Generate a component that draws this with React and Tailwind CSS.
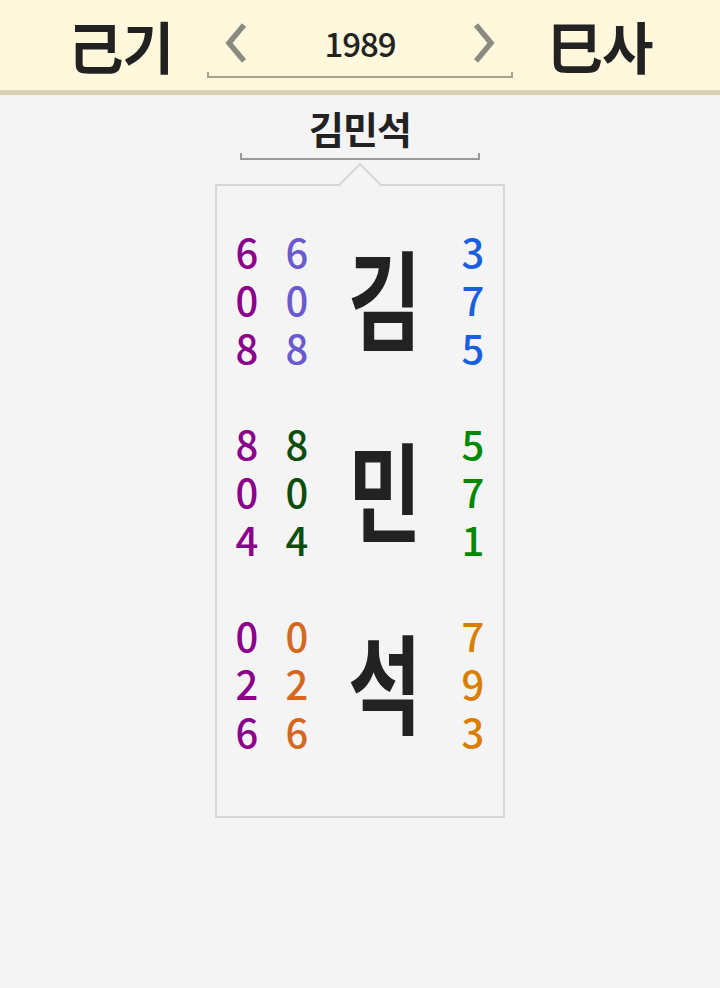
const FONT = { fontFamily: '"Noto Sans CJK KR", "Noto Sans", sans-serif' };

const rows = [
  { ch: "김", a: ["6", "0", "8"], b: ["6", "0", "8"], c: ["3", "7", "5"], bc: "text-[#6a5acd]", cc: "text-[#1a5fe0]" },
  { ch: "민", a: ["8", "0", "4"], b: ["8", "0", "4"], c: ["5", "7", "1"], bc: "text-[#0d4d0d]", cc: "text-[#008800]" },
  { ch: "석", a: ["0", "2", "6"], b: ["0", "2", "6"], c: ["7", "9", "3"], bc: "text-[#d2691e]", cc: "text-[#d97f00]" },
];

function Digits({ list, color }) {
  return (
    <div className={`flex w-[50px] flex-col items-center ${color}`}>
      {list.map((d, i) => (
        <span key={i} className="text-[40px] font-medium leading-[48px]">
          {d}
        </span>
      ))}
    </div>
  );
}

function Chevron({ flip }) {
  return (
    <svg width="26" height="42" viewBox="0 0 26 42" className={flip ? "-scale-x-100" : ""}>
      <path d="M21 3 L6 21 L21 39" fill="none" stroke="#8b8b80" strokeWidth="5.5" />
    </svg>
  );
}

export default function App() {
  return (
    <div className="min-h-screen bg-[#f4f4f4] text-[#222]" style={FONT}>
      <header className="border-b-[5px] border-[#d8d0b2] bg-[#fff8dc]">
        <div className="flex h-[90px] items-center justify-center gap-[34px]">
          <span className="text-[56px] font-bold leading-none tracking-[-1px]">己기</span>
          <div className="relative flex w-[306px] items-center justify-between px-[16px] pb-[4px]">
            <Chevron />
            <span className="text-[33px] font-medium leading-none tracking-[-1px]">1989</span>
            <Chevron flip />
            <div className="absolute bottom-[-10px] left-0 right-0 h-[6px] border-x-2 border-b-2 border-[#a8a490]" />
          </div>
          <span className="text-[56px] font-bold leading-none tracking-[-1px]">巳사</span>
        </div>
      </header>

      <main className="flex flex-col items-center pt-[10px]">
        <div className="text-[38px] font-bold leading-[46px] tracking-[-1px]">김민석</div>
        <div className="mt-[2px] h-[7px] w-[240px] border-x-2 border-b-2 border-[#9a9a9a]" />
        <div className="relative mt-[24px] h-[634px] w-[290px] border-2 border-[#d6d6d6] pt-[41px]">
          <div className="absolute left-1/2 top-[-17px] h-[30px] w-[30px] -translate-x-1/2 rotate-45 border-l-2 border-t-2 border-[#d6d6d6] bg-[#f4f4f4]" />
          <div className="flex flex-col gap-[48px]">
            {rows.map((r) => (
              <div key={r.ch} className="flex items-center pl-[5px]">
                <Digits list={r.a} color="text-[#8b008b]" />
                <Digits list={r.b} color={r.bc} />
                <div className="flex w-[126px] justify-center">
                  <span className="inline-block -translate-y-[4px] scale-x-[0.74] text-[108px] font-bold leading-none">
                    {r.ch}
                  </span>
                </div>
                <Digits list={r.c} color={r.cc} />
              </div>
            ))}
          </div>
        </div>
      </main>
    </div>
  );
}
